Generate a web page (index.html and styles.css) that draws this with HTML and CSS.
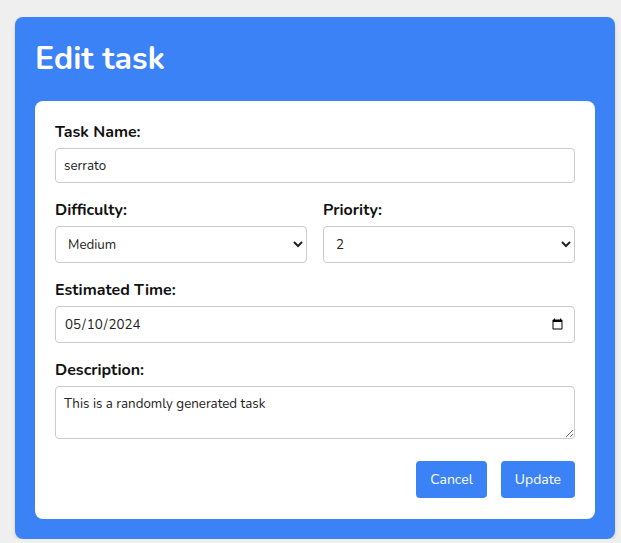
FILE: index.html
```html
<!DOCTYPE html>
<html lang="en">
<head>
<meta charset="utf-8">
<title>Edit task</title>
<link rel="stylesheet" href="styles.css">
</head>
<body>
<div class="modal">
  <h1 class="modal-title">Edit task</h1>
  <form class="panel">
    <div class="group">
      <label class="label" for="name">Task Name:</label>
      <input class="field" id="name" type="text" value="serrato">
    </div>
    <div class="row">
      <div class="group">
        <label class="label" for="diff">Difficulty:</label>
        <select class="field select" id="diff">
          <option>Easy</option>
          <option selected>Medium</option>
          <option>Hard</option>
        </select>
      </div>
      <div class="group">
        <label class="label" for="prio">Priority:</label>
        <select class="field select" id="prio">
          <option>1</option>
          <option selected>2</option>
          <option>3</option>
        </select>
      </div>
    </div>
    <div class="group">
      <label class="label" for="time">Estimated Time:</label>
      <input class="field date" id="time" type="date" value="2024-05-10">
    </div>
    <div class="group">
      <label class="label" for="desc">Description:</label>
      <textarea class="field area" id="desc">This is a randomly generated task</textarea>
    </div>
    <div class="actions">
      <button type="button" class="btn">Cancel</button>
      <button type="button" class="btn">Update</button>
    </div>
  </form>
</div>
</body>
</html>
```
FILE: styles.css
```css
html, body {
  margin: 0;
  padding: 0;
  background: #efefef;
}
body {
  font-family: "Nunito", "Lato", "Open Sans", sans-serif;
  color: #111;
}
.modal {
  width: 600px;
  box-sizing: border-box;
  margin: 17px 0 0 15px;
  padding: 20px 20px 20px 20px;
  background: #3b82f6;
  border-radius: 8px;
  box-shadow: 0 2px 4px rgba(0,0,0,0.12);
}
.modal-title {
  margin: 0 0 20px 0;
  font-size: 32px;
  line-height: 44px;
  font-weight: 700;
  color: #fff;
}
.panel {
  background: #fff;
  border-radius: 8px;
  padding: 20px 20px 21px;
}
.group {
  display: flex;
  flex-direction: column;
  margin-bottom: 16px;
}
.row {
  display: grid;
  grid-template-columns: 1fr 1fr;
  gap: 16px;
}
.label {
  font-size: 16px;
  line-height: 22px;
  font-weight: 700;
  margin-bottom: 5px;
}
.field {
  box-sizing: border-box;
  font-family: inherit;
  font-size: 13.333px;
  color: #222;
  border: 1px solid #ccc;
  border-radius: 4px;
  padding: 8px;
  height: 35px;
  background: #fff;
}
.select, .date {
  height: 37px;
}
.area {
  height: 53px;
  resize: vertical;
  margin-bottom: 6px;
}
.actions {
  display: flex;
  justify-content: flex-end;
  gap: 14px;
}
.btn {
  font-family: inherit;
  font-size: 14px;
  color: #fff;
  background: #3b82f6;
  border: none;
  border-radius: 4px;
  height: 37px;
  padding: 0 14px;
}
```
